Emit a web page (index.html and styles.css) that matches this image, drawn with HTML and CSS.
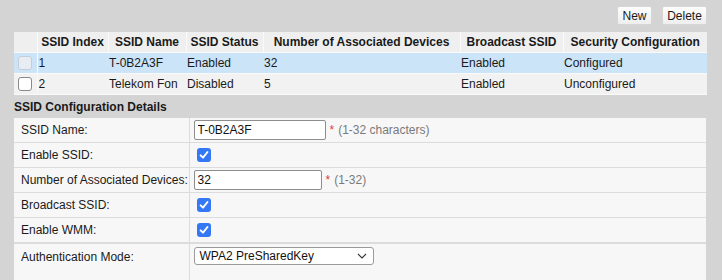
FILE: index.html
```html
<!DOCTYPE html>
<html>
<head>
<meta charset="utf-8">
<link rel="stylesheet" href="styles.css">
</head>
<body>
<div class="page">
  <div class="toolbar">
    <button class="btn btn-new">New</button>
    <button class="btn btn-del">Delete</button>
  </div>
  <table class="list">
    <colgroup>
      <col class="c-chk"><col class="c-idx"><col class="c-name"><col class="c-status"><col class="c-num"><col class="c-bc"><col class="c-sec">
    </colgroup>
    <thead>
      <tr>
        <th></th><th>SSID Index</th><th>SSID Name</th><th>SSID Status</th><th>Number of Associated Devices</th><th>Broadcast SSID</th><th>Security Configuration</th>
      </tr>
    </thead>
    <tbody>
      <tr class="sel">
        <td class="chkcell"><span class="rowbox disabled"></span></td><td>1</td><td>T-0B2A3F</td><td>Enabled</td><td>32</td><td>Enabled</td><td>Configured</td>
      </tr>
      <tr>
        <td class="chkcell"><span class="rowbox"></span></td><td>2</td><td>Telekom Fon</td><td>Disabled</td><td>5</td><td>Enabled</td><td>Unconfigured</td>
      </tr>
    </tbody>
  </table>
  <div class="section-title">SSID Configuration Details</div>
  <table class="config">
    <colgroup><col class="c-label"><col class="c-value"></colgroup>
    <tbody>
      <tr>
        <td class="label">SSID Name:</td>
        <td class="value"><input class="txt txt-name" type="text" value="T-0B2A3F"><span class="req">*</span><span class="hint">(1-32 characters)</span></td>
      </tr>
      <tr>
        <td class="label">Enable SSID:</td>
        <td class="value"><span class="check"><svg width="14" height="14" viewBox="0 0 14 14"><path d="M3.6 7.3 L6 9.7 L10.5 4" fill="none" stroke="#fff" stroke-width="1.9" stroke-linecap="round" stroke-linejoin="round"/></svg></span></td>
      </tr>
      <tr>
        <td class="label">Number of Associated Devices:</td>
        <td class="value"><input class="txt txt-num" type="text" value="32"><span class="req">*</span><span class="hint">(1-32)</span></td>
      </tr>
      <tr>
        <td class="label">Broadcast SSID:</td>
        <td class="value"><span class="check"><svg width="14" height="14" viewBox="0 0 14 14"><path d="M3.6 7.3 L6 9.7 L10.5 4" fill="none" stroke="#fff" stroke-width="1.9" stroke-linecap="round" stroke-linejoin="round"/></svg></span></td>
      </tr>
      <tr class="grp-end">
        <td class="label">Enable WMM:</td>
        <td class="value"><span class="check"><svg width="14" height="14" viewBox="0 0 14 14"><path d="M3.6 7.3 L6 9.7 L10.5 4" fill="none" stroke="#fff" stroke-width="1.9" stroke-linecap="round" stroke-linejoin="round"/></svg></span></td>
      </tr>
      <tr class="last">
        <td class="label">Authentication Mode:</td>
        <td class="value"><span class="select"><span class="select-text">WPA2 PreSharedKey</span><svg class="chev" width="10" height="6" viewBox="0 0 10 6"><path d="M1 1 L5 5 L9 1" fill="none" stroke="#333" stroke-width="1.1"/></svg></span></td>
      </tr>
    </tbody>
  </table>
</div>
</body>
</html>
```

FILE: styles.css
```css
html, body {
  margin: 0;
  padding: 0;
  background: #d4d4d4;
  font-family: "Liberation Sans", Arial, sans-serif;
  font-size: 12px;
  color: #1a1a1a;
  overflow: hidden;
}

.page {
  padding: 6px 15px 0 14px;
}

.toolbar {
  display: flex;
  justify-content: flex-end;
  gap: 10px;
  height: 19px;
  margin-bottom: 7px;
}

.btn {
  height: 19px;
  padding: 0;
  margin: 0;
  border: 1px solid #d6d6d6;
  border-radius: 2px;
  background: linear-gradient(#fdfdfd, #eeeeee);
  font-family: "Liberation Sans", Arial, sans-serif;
  font-size: 12px;
  color: #1a1a1a;
}

.btn-new { width: 35px; }
.btn-del { width: 45px; }

.list {
  width: 693px;
  border-collapse: collapse;
  table-layout: fixed;
}

.c-chk { width: 23px; }
.c-idx { width: 71px; }
.c-name { width: 78px; }
.c-status { width: 77px; }
.c-num { width: 197px; }
.c-bc { width: 103px; }
.c-sec { width: 144px; }

.list th {
  height: 20px;
  padding: 0;
  background: #efefef;
  font-weight: bold;
  text-align: center;
  border-left: 1px solid #fafafa;
  border-bottom: 1px solid #fafafa;
  white-space: nowrap;
}

.list th:first-child { border-left: none; }

.list td {
  height: 20px;
  padding: 0 0 0 1px;
  background: #f2f2f2;
  border-bottom: 1px solid #fafafa;
  white-space: nowrap;
}

.list tr.sel td { background: #cce4f8; }

.list td.chkcell {
  padding: 0;
  border-right: 1px solid #fafafa;
  text-align: center;
}

.rowbox {
  display: inline-block;
  width: 12px;
  height: 12px;
  border: 1px solid #8a8a8a;
  border-radius: 3px;
  background: #fff;
  vertical-align: middle;
}

.rowbox.disabled {
  background: #e7edf3;
  border-color: #c5ced8;
}

.section-title {
  font-weight: bold;
  line-height: 16px;
  padding: 4px 0 3px 0;
}

.config {
  width: 692px;
  border-collapse: collapse;
  table-layout: fixed;
}

.c-label { width: 175px; }

.config td {
  height: 24px;
  padding: 0;
  background: #f7f7f7;
  border-bottom: 1px solid #dcdcdc;
  white-space: nowrap;
}

.config td.label {
  padding-left: 7px;
  border-right: 1px solid #dcdcdc;
}

.config td.value {
  padding-left: 4px;
}

.config tr.grp-end td {
  border-bottom: 2px solid #dcdcdc;
}

.config tr.last td {
  height: 36px;
  vertical-align: top;
  padding-top: 3px;
  border-bottom: none;
}

.config tr.last td.label { padding-top: 6px; }

.txt {
  box-sizing: border-box;
  height: 20px;
  margin: 0;
  padding: 0 3px;
  border: 1px solid #8d8d8d;
  border-radius: 2px;
  background: #fff;
  font-family: "Liberation Sans", Arial, sans-serif;
  font-size: 12px;
  color: #111;
  vertical-align: middle;
}

.txt-name { width: 132px; }
.txt-num { width: 128px; }

.req {
  color: #e23b3b;
  margin-left: 4px;
  vertical-align: middle;
}

.hint {
  color: #7a7a7a;
  margin-left: 4px;
  vertical-align: middle;
}

.check {
  display: inline-flex;
  width: 14px;
  height: 14px;
  margin-left: 3px;
  border-radius: 3px;
  background: #3478f6;
  vertical-align: middle;
}

.select {
  position: relative;
  display: inline-flex;
  align-items: center;
  box-sizing: border-box;
  width: 180px;
  height: 18px;
  padding-left: 5px;
  border: 1px solid #9a9a9a;
  border-radius: 3px;
  background: #fff;
}

.select-text { color: #111; }

.chev {
  position: absolute;
  right: 6px;
  top: 5px;
}
```
